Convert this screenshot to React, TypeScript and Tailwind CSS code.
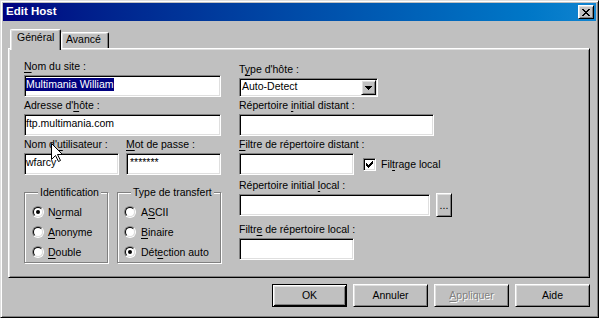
import type { ReactNode } from "react";

const sunken =
  "border border-t-[#808080] border-l-[#808080] border-r-white border-b-white shadow-[inset_1px_1px_0_#000,inset_-1px_-1px_0_#dfdfdf]";
const raised =
  "border border-t-white border-l-white border-r-black border-b-black shadow-[inset_1px_1px_0_#dfdfdf,inset_-1px_-1px_0_#808080]";

function U({ children }: { children: ReactNode }) {
  return <span className="underline decoration-1 underline-offset-[2px]">{children}</span>;
}

function Label({ children, className = "" }: { children: ReactNode; className?: string }) {
  return <div className={`mb-[2px] h-[13px] whitespace-nowrap leading-[13px] ${className}`}>{children}</div>;
}

function Edit({ className = "", children }: { className?: string; children?: ReactNode }) {
  return (
    <div className={`${sunken} h-[22px] shrink-0 overflow-hidden whitespace-nowrap bg-white pl-[1px] pt-[2px] leading-[13px] ${className}`}>
      {children}
    </div>
  );
}

function Radio({ checked }: { checked?: boolean }) {
  return (
    <span className="flex h-[12px] w-[12px] shrink-0 items-center justify-center rounded-full border border-t-[#808080] border-l-[#808080] border-r-white border-b-white">
      <span className="flex h-[10px] w-[10px] items-center justify-center rounded-full border border-t-black border-l-black border-r-[#dfdfdf] border-b-[#dfdfdf] bg-white">
        {checked && <span className="h-[4px] w-[4px] rounded-full bg-black" />}
      </span>
    </span>
  );
}

function RadioRow({ checked, children, gap = "gap-[4px]" }: { checked?: boolean; children: ReactNode; gap?: string }) {
  return (
    <div className={`flex h-[20px] items-center ${gap}`}>
      <Radio checked={checked} />
      <span className="leading-[13px]">{children}</span>
    </div>
  );
}

function Button({ children, def }: { children: ReactNode; def?: boolean }) {
  const edge = def
    ? "border border-black shadow-[inset_1px_1px_0_#fff,inset_-1px_-1px_0_#000,inset_2px_2px_0_#dfdfdf,inset_-2px_-2px_0_#808080]"
    : raised;
  return <div className={`${edge} flex h-[23px] w-[75px] items-center justify-center`}>{children}</div>;
}

export default function App() {
  return (
    <div className="relative h-[318px] w-[599px] overflow-hidden border border-t-[#dfdfdf] border-l-[#dfdfdf] border-r-black border-b-black bg-[#c0c0c0] p-[2px] font-['Liberation_Sans',Arial,sans-serif] text-[10.5px] text-black shadow-[inset_1px_1px_0_#fff,inset_-1px_-1px_0_#808080]">
      {/* title bar */}
      <div className="flex h-[18px] items-center justify-between bg-linear-to-r from-[#000080] to-[#1084d0] pl-[3px] pr-[2px]">
        <span className="text-[11.5px] font-bold leading-none text-white">Edit Host</span>
        <div className={`${raised} flex h-[14px] w-[16px] items-center justify-center bg-[#c0c0c0]`}>
          <svg width="8" height="7" viewBox="0 0 8 7" shapeRendering="crispEdges" className="ml-[-1px]">
            <path
              d="M0 0h2v1h-2zM6 0h2v1h-2zM1 1h2v1h-2zM5 1h2v1h-2zM2 2h4v1h-4zM3 3h2v1h-2zM2 4h4v1h-4zM1 5h2v1h-2zM5 5h2v1h-2zM0 6h2v1h-2zM6 6h2v1h-2z"
              fill="#000"
            />
          </svg>
        </div>
      </div>

      <div className="ml-[5px] mt-[8px] w-[582px]">
        {/* tabs */}
        <div className="flex h-[19px] items-end pl-[2px]">
          <div className="relative z-10 -mb-[2px] h-[21px] w-[51px] rounded-t-[2px] border-l border-t border-r border-l-white border-t-white border-r-black bg-[#c0c0c0] pl-[6px] pt-[1px] leading-[13px] shadow-[inset_-1px_0_0_#808080,inset_1px_1px_0_#dfdfdf]">
            Général
          </div>
          <div className="h-[16px] w-[48px] rounded-t-[2px] border-l border-t border-r border-l-white border-t-white border-r-black pl-[4px] leading-[13px] shadow-[inset_-1px_0_0_#808080,inset_1px_1px_0_#dfdfdf]">
            Avancé
          </div>
        </div>

        {/* tab body */}
        <div className={`${raised} flex h-[230px] pl-[15px]`}>
          <div className="flex w-[197px] flex-col pt-[11px]">
            <Label>
              <U>N</U>om du site :
            </Label>
            <Edit className="w-[197px]">
              <span className="inline-block h-[13px] bg-[#000080] text-white">Multimania William</span>
            </Edit>

            <Label className="mt-[2px]">
              Adresse d'<U>h</U>ôte :
            </Label>
            <Edit className="w-[197px]">ftp.multimania.com</Edit>

            <div className="mt-[2px] flex gap-[7px]">
              <Label className="w-[95px]">
                Nom d'<U>u</U>tilisateur :
              </Label>
              <Label className="w-[95px]">
                <U>M</U>ot de passe :
              </Label>
            </div>
            <div className="flex gap-[7px]">
              <Edit className="w-[95px]">wfarcy</Edit>
              <Edit className="w-[95px] pl-[3px]">*******</Edit>
            </div>

            <div className="mt-[11px] flex gap-[9px]">
              <fieldset className="w-[84px] border border-[#808080] pl-[7px] pt-[3px] shadow-[inset_1px_1px_0_#fff,1px_1px_0_#fff]">
                <legend className="ml-[6px] h-[13px] bg-[#c0c0c0] px-[2px] leading-[13px]">Identification</legend>
                <RadioRow checked>
                  N<U>o</U>rmal
                </RadioRow>
                <RadioRow>
                  <U>A</U>nonyme
                </RadioRow>
                <RadioRow>
                  <U>D</U>ouble
                </RadioRow>
              </fieldset>
              <fieldset className="w-[104px] border border-[#808080] pl-[6px] pt-[3px] shadow-[inset_1px_1px_0_#fff,1px_1px_0_#fff]">
                <legend className="ml-[7px] h-[13px] bg-[#c0c0c0] px-[2px] leading-[13px]">Type de transfert</legend>
                <RadioRow gap="gap-[5px]">
                  A<U>S</U>CII
                </RadioRow>
                <RadioRow gap="gap-[5px]">
                  <U>B</U>inaire
                </RadioRow>
                <RadioRow checked gap="gap-[5px]">
                  Dét<U>e</U>ction auto
                </RadioRow>
              </fieldset>
            </div>
          </div>

          <div className="ml-[18px] flex flex-col pt-[14px]">
            <Label>
              T<U>y</U>pe d'hôte :
            </Label>
            <div className={`${sunken} flex h-[19px] w-[139px] items-start bg-white`}>
              <span className="flex-1 pl-[2px] pt-[1px] leading-[13px]">Auto-Detect</span>
              <span className={`${raised} mr-[1px] mt-[1px] flex h-[15px] w-[15px] items-center justify-center bg-[#c0c0c0]`}>
                <svg width="7" height="4" viewBox="0 0 7 4" shapeRendering="crispEdges">
                  <path d="M0 0h7v1h-7zM1 1h5v1h-5zM2 2h3v1h-3zM3 3h1v1h-1z" fill="#000" />
                </svg>
              </span>
            </div>

            <Label className="mt-[2px]">
              Répertoire <U>i</U>nitial distant :
            </Label>
            <Edit className="w-[195px]" />

            <Label className="mt-[2px]">
              <U>F</U>iltre de répertoire distant :
            </Label>
            <div className="flex items-center">
              <Edit className="w-[115px]" />
              <span className={`${sunken} ml-[9px] flex h-[13px] w-[13px] items-center justify-center bg-white`}>
                <svg width="7" height="7" viewBox="0 0 7 7" shapeRendering="crispEdges">
                  <path
                    d="M6 0h1v1h-1zM5 1h2v1h-2zM0 2h1v1h-1zM4 2h3v1h-3zM0 3h2v1h-2zM3 3h3v1h-3zM0 4h5v1h-5zM1 5h3v1h-3zM2 6h1v1h-1z"
                    fill="#000"
                  />
                </svg>
              </span>
              <span className="ml-[5px] leading-[13px]">
                Fil<U>t</U>rage local
              </span>
            </div>

            <Label className="mt-[4px]">
              Répertoire initial <U>l</U>ocal :
            </Label>
            <div className="flex items-start">
              <Edit className="w-[191px]" />
              <div className={`${raised} -mt-[1px] ml-[6px] flex h-[24px] w-[16px] items-center justify-center leading-[13px]`}>
                ...
              </div>
            </div>

            <Label className="mt-[6px]">
              Filtr<U>e</U> de répertoire local :
            </Label>
            <Edit className="w-[115px]" />
          </div>
        </div>

        {/* buttons */}
        <div className="mt-[6px] flex justify-end gap-[6px]">
          <Button def>OK</Button>
          <Button>Annuler</Button>
          <Button>
            <span className="text-[#808080] [text-shadow:1px_1px_0_#fff]">
              <U>A</U>ppliquer
            </span>
          </Button>
          <Button>Aide</Button>
        </div>
      </div>

      {/* mouse pointer */}
      <svg className="absolute left-[50px] top-[142px]" width="13" height="20" viewBox="0 0 13 20">
        <path d="M0.5 0.5V16.5L4.5 12.5L7.5 18.5L9.5 17.5L6.5 11.5H11.5Z" fill="#fff" stroke="#000" strokeWidth="1" />
      </svg>
    </div>
  );
}
